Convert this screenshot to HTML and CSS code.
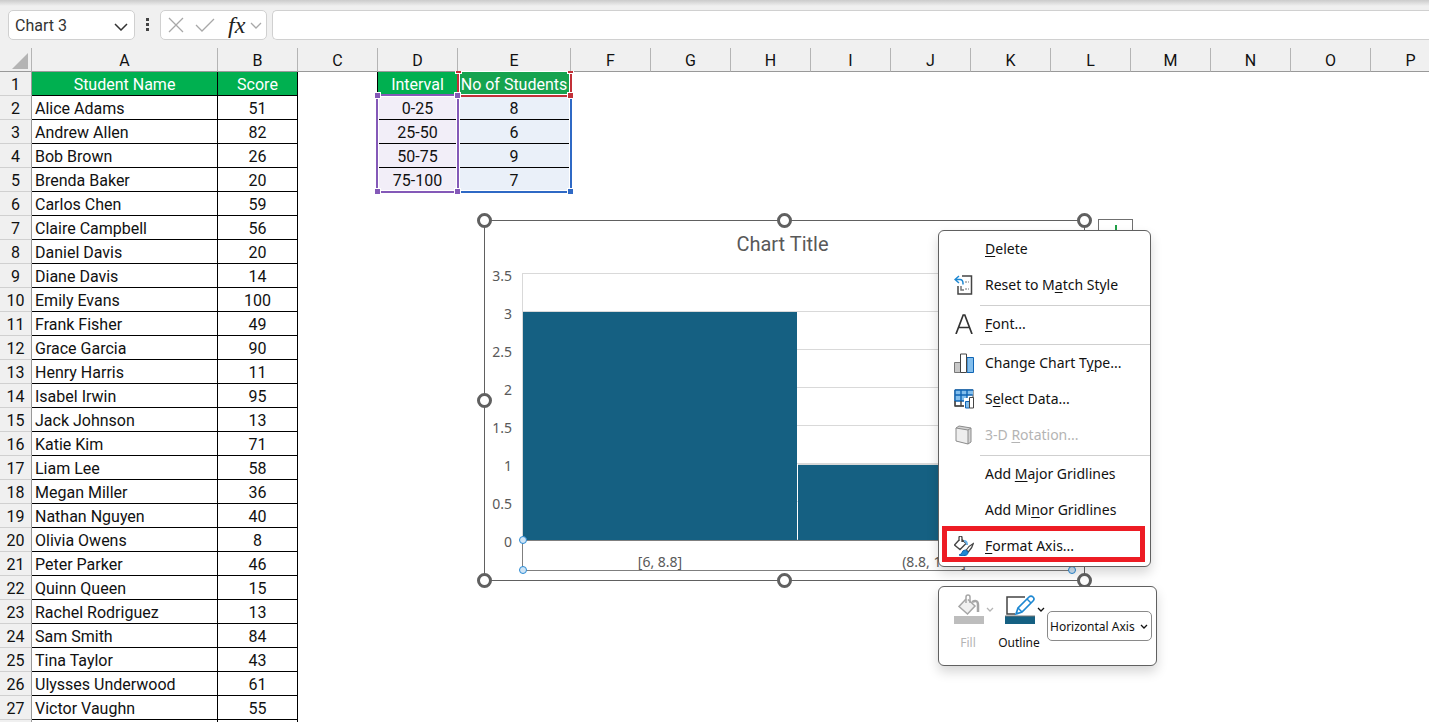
FILE: index.html
```html
<!DOCTYPE html>
<html lang="en">
<head>
  <meta charset="utf-8">
  <title>Student scores</title>
  <link rel="stylesheet" href="styles.css">
</head>
<body>
  <div class="formula-bar">
    <div class="name-box">
      <select aria-label="Name box">
        <option>Chart 3</option>
      </select>
      <svg class="chevron" viewBox="0 0 14 8"><path d="M1 1l6 6 6-6"/></svg>
    </div>
    <svg class="grip" viewBox="0 0 4 14">
      <rect width="3" height="3"/><rect y="5" width="3" height="3"/><rect y="10" width="3" height="3"/>
    </svg>
    <div class="formula-tools">
      <button aria-label="Cancel"><svg width="16" height="16" viewBox="0 0 16 16"><path d="M1 1l14 14M15 1L1 15"/></svg></button>
      <button aria-label="Enter"><svg width="20" height="14" viewBox="0 0 20 14"><path d="M1 7l6 6L19 1"/></svg></button>
      <button class="fx" aria-label="Insert function">fx</button>
      <button aria-label="More functions"><svg width="12" height="7" viewBox="0 0 12 7"><path d="M1 1l5 5 5-5"/></svg></button>
    </div>
    <input class="formula" type="text" aria-label="Formula bar">
  </div>

  <div class="sheet">
    <table class="grid">
      <colgroup>
        <col class="col-num"><col class="col-name"><col><col><col><col class="col-count">
        <col><col><col><col><col><col><col><col><col><col><col>
      </colgroup>
      <thead>
        <tr>
          <th class="corner"><svg width="16" height="16" viewBox="0 0 16 16"><path d="M16 0v16H0z"/></svg></th>
          <th>A</th><th>B</th><th>C</th><th>D</th><th>E</th><th>F</th><th>G</th><th>H</th>
          <th>I</th><th>J</th><th>K</th><th>L</th><th>M</th><th>N</th><th>O</th><th>P</th>
        </tr>
      </thead>
      <tbody>
        <tr class="titles"><th>1</th><td>Student Name</td><td>Score</td><td class="blank"></td><td>Interval</td><td class="series">No of Students</td></tr>
        <tr><th>2</th><td class="name">Alice Adams</td><td>51</td><td class="blank"></td><td class="interval">0-25</td><td class="count">8</td></tr>
        <tr><th>3</th><td class="name">Andrew Allen</td><td>82</td><td class="blank"></td><td class="interval">25-50</td><td class="count">6</td></tr>
        <tr><th>4</th><td class="name">Bob Brown</td><td>26</td><td class="blank"></td><td class="interval">50-75</td><td class="count">9</td></tr>
        <tr><th>5</th><td class="name">Brenda Baker</td><td>20</td><td class="blank"></td><td class="interval">75-100</td><td class="count">7</td></tr>
        <tr><th>6</th><td class="name">Carlos Chen</td><td>59</td></tr>
        <tr><th>7</th><td class="name">Claire Campbell</td><td>56</td></tr>
        <tr><th>8</th><td class="name">Daniel Davis</td><td>20</td></tr>
        <tr><th>9</th><td class="name">Diane Davis</td><td>14</td></tr>
        <tr><th>10</th><td class="name">Emily Evans</td><td>100</td></tr>
        <tr><th>11</th><td class="name">Frank Fisher</td><td>49</td></tr>
        <tr><th>12</th><td class="name">Grace Garcia</td><td>90</td></tr>
        <tr><th>13</th><td class="name">Henry Harris</td><td>11</td></tr>
        <tr><th>14</th><td class="name">Isabel Irwin</td><td>95</td></tr>
        <tr><th>15</th><td class="name">Jack Johnson</td><td>13</td></tr>
        <tr><th>16</th><td class="name">Katie Kim</td><td>71</td></tr>
        <tr><th>17</th><td class="name">Liam Lee</td><td>58</td></tr>
        <tr><th>18</th><td class="name">Megan Miller</td><td>36</td></tr>
        <tr><th>19</th><td class="name">Nathan Nguyen</td><td>40</td></tr>
        <tr><th>20</th><td class="name">Olivia Owens</td><td>8</td></tr>
        <tr><th>21</th><td class="name">Peter Parker</td><td>46</td></tr>
        <tr><th>22</th><td class="name">Quinn Queen</td><td>15</td></tr>
        <tr><th>23</th><td class="name">Rachel Rodriguez</td><td>13</td></tr>
        <tr><th>24</th><td class="name">Sam Smith</td><td>84</td></tr>
        <tr><th>25</th><td class="name">Tina Taylor</td><td>43</td></tr>
        <tr><th>26</th><td class="name">Ulysses Underwood</td><td>61</td></tr>
        <tr><th>27</th><td class="name">Victor Vaughn</td><td>55</td></tr>
        <tr><th></th><td></td><td></td></tr>
      </tbody>
    </table>

    <!-- chart source ranges -->
    <div class="range range-values"><i class="br"></i></div>
    <div class="range range-series"><i class="tl"></i><i class="tr"></i><i class="br"></i></div>
    <div class="range range-labels"><i class="tl"></i><i class="tr"></i><i class="bl"></i><i class="br"></i></div>

    <div class="chart">
      <div class="chart-title">Chart Title</div>
      <div class="chart-body">
        <div class="values">
          <span>3.5</span><span>3</span><span>2.5</span><span>2</span><span>1.5</span><span>1</span><span>0.5</span><span>0</span>
        </div>
        <div class="plot">
          <div class="bars">
            <div class="bar" style="height: 85.7%"></div>
            <div class="bar" style="height: 28.6%"></div>
          </div>
          <div class="categories">
            <span>[6, 8.8]</span><span>(8.8, 11.6]</span>
            <i class="dot tl"></i><i class="dot bl"></i><i class="dot tr"></i><i class="dot br"></i>
          </div>
        </div>
      </div>
      <i class="handle tl"></i><i class="handle tc"></i><i class="handle tr"></i>
      <i class="handle ml"></i>
      <i class="handle bl"></i><i class="handle bc"></i><i class="handle br"></i>
    </div>

    <button class="chart-elements" aria-label="Chart elements">
      <svg width="16" height="16" viewBox="0 0 16 16"><path d="M8 0v16M0 8h16"/></svg>
    </button>

    <div class="menu">
      <button><span class="icon"></span><span><u>D</u>elete</span></button>
      <button>
        <svg class="icon" viewBox="0 0 20 20" fill="none">
          <path d="M8 1h9.500v18H4v-8" stroke="#444" stroke-width="1.500"/>
          <path d="M5 1L1 4.500 5 8M1 4.500h5q3 0 3 4v1" stroke="#1e88d2" stroke-width="1.500"/>
          <path d="M11 7h4M11 14h4" stroke="#777" stroke-dasharray="2 1"/>
          <path d="M7 11v4h3" stroke="#777" stroke-width="1.500"/>
        </svg>
        <span>Reset to M<u>a</u>tch Style</span>
      </button>
      <hr>
      <button>
        <svg class="icon" viewBox="0 0 20 20" fill="none"><path d="M2 20L9.200 1h1.600L18 20M4.500 13.500h11" stroke="#333" stroke-width="1.700"/></svg>
        <span><u>F</u>ont...</span>
      </button>
      <hr>
      <button>
        <svg class="icon" viewBox="0 0 20 20">
          <path d="M.5 9.500h6v10h-6z" fill="#c8c8c8" stroke="#777"/>
          <path d="M13 4.500h6.500v15H13z" fill="#83beec" stroke="#0f64b4"/>
          <path d="M6.500 1h6v18.500h-6z" fill="#fff" stroke="#444"/>
        </svg>
        <span>Change Chart T<u>y</u>pe...</span>
      </button>
      <button>
        <svg class="icon" viewBox="0 0 20 20">
          <path d="M1 1h18v16H1z" fill="#fff" stroke="#444"/>
          <path d="M1 1h18v5H1zM1 6h12v6H1z" fill="#83beec"/>
          <path d="M.7 1h18.600M.7 6h18M.7 12h12M1 1v11M7 1v11M13 1v9" fill="none" stroke="#0f64b4" stroke-width="1.400"/>
          <path d="M1 12v5h9M7 12v5" fill="none" stroke="#444" stroke-width="1.400"/>
          <path d="M10 9h10v11H10z" fill="#fff"/>
          <path d="M11.500 12.500h4v6.500h-4z" fill="#83beec" stroke="#0f64b4"/>
          <path d="M15.500 8.500h4V19h-4z" fill="#fff" stroke="#444"/>
        </svg>
        <span>S<u>e</u>lect Data...</span>
      </button>
      <button disabled>
        <svg class="icon" viewBox="0 0 20 20" stroke="#8c8c8c" stroke-linejoin="round">
          <path d="M2 3l3-2 12 2v14l-3 2z" fill="#d4d4d4"/>
          <path d="M2 3l12 2v14L2 16z" fill="#eee"/>
          <path d="M14 5l3-2" fill="none"/>
        </svg>
        <span>3-D <u>R</u>otation...</span>
      </button>
      <hr>
      <button><span class="icon"></span><span>Add <u>M</u>ajor Gridlines</span></button>
      <button><span class="icon"></span><span>Add Mi<u>n</u>or Gridlines</span></button>
      <button>
        <svg class="icon" viewBox="0 0 20 20" fill="none">
          <path d="M5.500 3.500l-5 5.500L6 13.500l6-6L7.500 3M5 5V2q0-2 1.500-2T8 2v4" stroke="#444" stroke-width="1.300"/>
          <path d="M10 5q3 0 3 4" stroke="#6bb1e6" stroke-width="2"/>
          <path d="M19.300 7.500q-4 2-7 6.500l2 2q4-4 5-8.500z" fill="#fff" stroke="#444" stroke-width="1.200"/>
          <path d="M11.500 14q-3 0-3.500 2.500-.5 2-3 2.500 4 1.800 7.500 0 2-1.200 1.500-3z" fill="#1e88d2" stroke="#0f64b4"/>
        </svg>
        <span><u>F</u>ormat Axis...</span>
      </button>
      <div class="highlight"></div>
    </div>

    <div class="mini-toolbar">
      <button disabled>
        <span class="tool">
          <svg width="30" height="30" viewBox="0 0 30 30" fill="none">
            <path d="M12 5l-7 7.500 8.500 7.500 7.500-8L14 5.500" fill="#f0f0f0" stroke="#a6a6a6" stroke-width="1.500"/>
            <path d="M12 9V3q0-2 2-2t2 2v6" stroke="#a6a6a6" stroke-width="1.500"/>
            <path d="M18 8q6-3 6 3v7" stroke="#a6a6a6" stroke-width="2.500"/>
            <path d="M0 22h30v8H0z" fill="#bdbdbd"/>
          </svg>
          <svg class="arrow" viewBox="0 0 8 5"><path d="M1 1l3 3 3-3"/></svg>
        </span>
        Fill
      </button>
      <button>
        <span class="tool">
          <svg width="30" height="30" viewBox="0 0 30 30" fill="none">
            <path d="M20 3H2v17h8" stroke="#444" stroke-width="1.500"/>
            <path d="M11 20l2-6L24 3q2-2 4 0t0 4L17 18z" fill="#fff" stroke="#1e88d2" stroke-width="1.700"/>
            <path d="M22 5l4 4M13 14l4 4" stroke="#1e88d2" stroke-width="1.500"/>
            <path d="M0 22h30v8H0z" fill="#156082"/>
            <path d="M0 22h30" stroke="#777"/>
          </svg>
          <svg class="arrow" viewBox="0 0 8 5"><path d="M1 1l3 3 3-3"/></svg>
        </span>
        Outline
      </button>
      <div class="element-picker">
        <select aria-label="Chart element">
          <option>Horizontal Axis</option>
        </select>
        <svg class="arrow" viewBox="0 0 8 5"><path d="M1 1l3 3 3-3"/></svg>
      </div>
    </div>
  </div>
</body>
</html>
```
FILE: styles.css
```css
* {
  box-sizing: border-box;
}
body {
  margin: 0;
  height: 100vh;
  overflow: hidden;
  display: flex;
  flex-direction: column;
  background: #fff;
  color: #111;
  font-family: Roboto, sans-serif;
  font-size: 16px;
}
button,
select,
input {
  font: inherit;
  color: inherit;
}
button {
  padding: 0;
  border: 0;
  background: none;
}
select {
  appearance: none;
  border: 0;
  background: none;
  outline: 0;
}

/* formula bar */
.formula-bar {
  display: flex;
  align-items: center;
  flex: none;
  height: 48px;
  padding: 2px 0 0 8px;
  background: linear-gradient(#cbcbcb, #f0f0f0 6px);
}
.name-box,
.formula-tools,
.formula {
  height: 30px;
  border: 1px solid #d0d0d0;
  border-radius: 5px;
  background: #fff;
}
.name-box {
  position: relative;
  width: 127px;
}
.name-box select {
  width: 100%;
  height: 28px;
  padding: 0 6px;
  color: #333;
}
.chevron {
  position: absolute;
  right: 6px;
  top: 12px;
  width: 14px;
  height: 8px;
  fill: none;
  stroke: #333;
  stroke-width: 1.5;
  pointer-events: none;
}
.grip {
  width: 4px;
  height: 14px;
  margin: 0 10px 0 11px;
  fill: #444;
}
.formula-tools {
  display: flex;
  align-items: center;
  gap: 11px;
  width: 107px;
  padding-left: 7px;
}
.formula-tools button {
  display: flex;
}
.formula-tools svg {
  fill: none;
  stroke: #a8a8a8;
  stroke-width: 1.3;
}
.formula-tools .fx {
  padding-left: 2px;
  font: italic 24px/24px "Liberation Serif", serif;
  color: #222;
}
.formula-tools .fx + button {
  margin-left: -6px;
}
.formula {
  flex: 1;
  margin-left: 5px;
  border-right: 0;
  border-radius: 5px 0 0 5px;
}

/* worksheet */
.sheet {
  position: relative;
  flex: 1;
  overflow: hidden;
}
.grid {
  table-layout: fixed;
  width: 1451px;
  border-spacing: 0;
}
.grid col {
  width: 80px;
}
.grid .col-num {
  width: 32px;
}
.grid .col-name {
  width: 186px;
}
.grid .col-count {
  width: 113px;
}
.grid tr {
  height: 24px;
}
.grid th,
.grid td {
  height: 24px;
  padding: 2px 0 0;
  line-height: 20px;
  text-align: center;
  white-space: nowrap;
}
.grid th {
  background: #f0f0f0;
  font-weight: 400;
}
.grid thead th {
  border-right: 1px solid #b4b4b4;
  border-bottom: 1px solid #999;
}
.grid .corner svg {
  display: block;
  margin-left: 12px;
  fill: #b4b4b4;
}
.grid tbody th {
  border-right: 1px solid #999;
  border-bottom: 1px solid #d0d0d0;
}
.grid td {
  border-right: 1px solid #000;
  border-bottom: 1px solid #000;
}
.grid .name {
  padding-left: 3px;
  text-align: left;
}
.grid .titles td {
  background: #00b050;
  color: #fff;
}
.grid .titles .series {
  background: #16a34f;
}
.grid .blank,
.grid .titles .blank {
  border-bottom: 0;
  background: #fff;
}
.grid .interval {
  background: #f2eef8;
}
.grid .count {
  background: #eaf0f9;
}

/* source range outlines */
.range {
  position: absolute;
  border: 2px solid;
  box-shadow: inset 0 0 0 1px #fff;
}
.range-labels {
  left: 376px;
  top: 46px;
  width: 83px;
  height: 99px;
  color: #8459b8;
}
.range-series {
  left: 457px;
  top: 23px;
  width: 115px;
  height: 26px;
  border-top: 0;
  color: #c23038;
}
.range-values {
  left: 457px;
  top: 46px;
  width: 115px;
  height: 99px;
  color: #2f69c5;
}
.range i {
  position: absolute;
  width: 7px;
  height: 7px;
  border: 1px solid #fff;
  background: currentColor;
}
.range .tl,
.range .bl {
  left: -4px;
}
.range .tr,
.range .br {
  right: -4px;
}
.range .tl,
.range .tr {
  top: -4px;
}
.range .bl,
.range .br {
  bottom: -4px;
}
/* the first row sits right under the column letters, so only half a handle shows */
.range-series .tl,
.range-series .tr {
  top: 0;
  height: 3px;
  border-top: 0;
}

/* chart */
.chart {
  position: absolute;
  left: 484px;
  top: 172px;
  width: 601px;
  height: 361px;
  border: 1px solid #606060;
  background: #fff;
  color: #595959;
}
.chart-title {
  height: 34px;
  padding-right: 4px;
  line-height: 46px;
  font-size: 20px;
  text-align: center;
}
.chart-body {
  display: flex;
  gap: 10px;
  padding-right: 12px;
  font-family: "Noto Sans", sans-serif;
  font-size: 14px;
}
.values {
  display: flex;
  flex-direction: column;
  width: 27px;
  text-align: right;
}
.values span {
  height: 38px;
  line-height: 42px;
}
.plot {
  flex: 1;
  margin-top: 18px;
}
.bars {
  display: flex;
  align-items: flex-end;
  gap: 1px;
  height: 267px;
  border-left: 1px solid #d9d9d9;
  background: repeating-linear-gradient(#d9d9d9 0 1px, #fff 1px 38px);
}
.bar {
  flex: 1;
  border-top: 1px solid #d9d9d9;
  background: #156082;
}
.categories {
  position: relative;
  display: flex;
  align-items: flex-end;
  height: 31px;
  border: 1px solid #7f7f7f;
}
.categories span {
  flex: 1;
  line-height: 16px;
  text-align: center;
}
.handle,
.dot {
  position: absolute;
  border-radius: 50%;
}
.handle {
  width: 15px;
  height: 15px;
  border: 3px solid #606060;
  background: #fff;
}
.handle.tl,
.handle.ml,
.handle.bl {
  left: -8px;
}
.handle.tc,
.handle.bc {
  left: calc(50% - 8px);
}
.handle.tr,
.handle.br {
  right: -8px;
}
.handle.tl,
.handle.tc,
.handle.tr {
  top: -8px;
}
.handle.ml {
  top: calc(50% - 8px);
}
.handle.bl,
.handle.bc,
.handle.br {
  bottom: -8px;
}
.dot {
  width: 8px;
  height: 8px;
  border: 1px solid #2a8ad4;
  background: #cfe4f5;
}
.dot.tl,
.dot.bl {
  left: -4px;
}
.dot.tr,
.dot.br {
  right: -5px;
}
.dot.tl,
.dot.tr {
  top: -5px;
}
.dot.bl,
.dot.br {
  bottom: -4px;
}
.chart-elements {
  position: absolute;
  left: 1098px;
  top: 171px;
  display: flex;
  justify-content: center;
  width: 35px;
  height: 35px;
  padding-top: 5px;
  border: 1px solid #707070;
  background: #fff;
}
.chart-elements path {
  stroke: #21a047;
  stroke-width: 2;
}

/* context menu */
.menu,
.mini-toolbar {
  position: absolute;
  left: 938px;
  border: 1px solid #606060;
  border-radius: 6px;
  background: #fff;
  box-shadow: 0 6px 12px rgba(0, 0, 0, 0.16);
  font-family: "Noto Sans", sans-serif;
}
.menu {
  top: 182px;
  width: 213px;
  padding: 1px 0;
  font-size: 14px;
}
.menu button {
  display: flex;
  align-items: center;
  gap: 11px;
  width: 100%;
  height: 36px;
  padding: 0 0 3px 15px;
}
.menu button:disabled,
.mini-toolbar button:disabled {
  color: #b4b4b4;
}
.menu .icon {
  width: 20px;
  height: 20px;
}
.menu u {
  text-underline-offset: 2px;
}
.menu hr {
  height: 1px;
  margin: 1px 0 1px 41px;
  border: 0;
  background: #cfcfcf;
}
.highlight {
  position: absolute;
  left: 3px;
  right: 5px;
  bottom: 4px;
  height: 36px;
  border: 5px solid #ed1c24;
  pointer-events: none;
}

/* mini toolbar */
.mini-toolbar {
  top: 538px;
  display: flex;
  align-items: flex-start;
  width: 219px;
  height: 80px;
  padding: 7px 4px 0 15px;
  font-size: 12px;
}
.mini-toolbar button {
  display: flex;
  flex-direction: column;
  align-items: center;
  gap: 10px;
  width: 28px;
  line-height: 18px;
}
.mini-toolbar button + button {
  margin-left: 23px;
}
.tool {
  display: flex;
  align-items: center;
  align-self: flex-start;
  gap: 2px;
}
.tool svg {
  flex: none;
}
.arrow {
  width: 8px;
  height: 5px;
  fill: none;
  stroke: currentColor;
  stroke-width: 1.3;
}
.element-picker {
  position: relative;
  width: 105px;
  height: 30px;
  margin: 17px 0 0 auto;
  border: 1px solid #8a8a8a;
  border-radius: 5px;
}
.element-picker select {
  width: 88px;
  height: 28px;
  padding: 0 0 0 2px;
  overflow: hidden;
}
.element-picker .arrow {
  position: absolute;
  right: 3px;
  top: 12px;
  pointer-events: none;
}
```
